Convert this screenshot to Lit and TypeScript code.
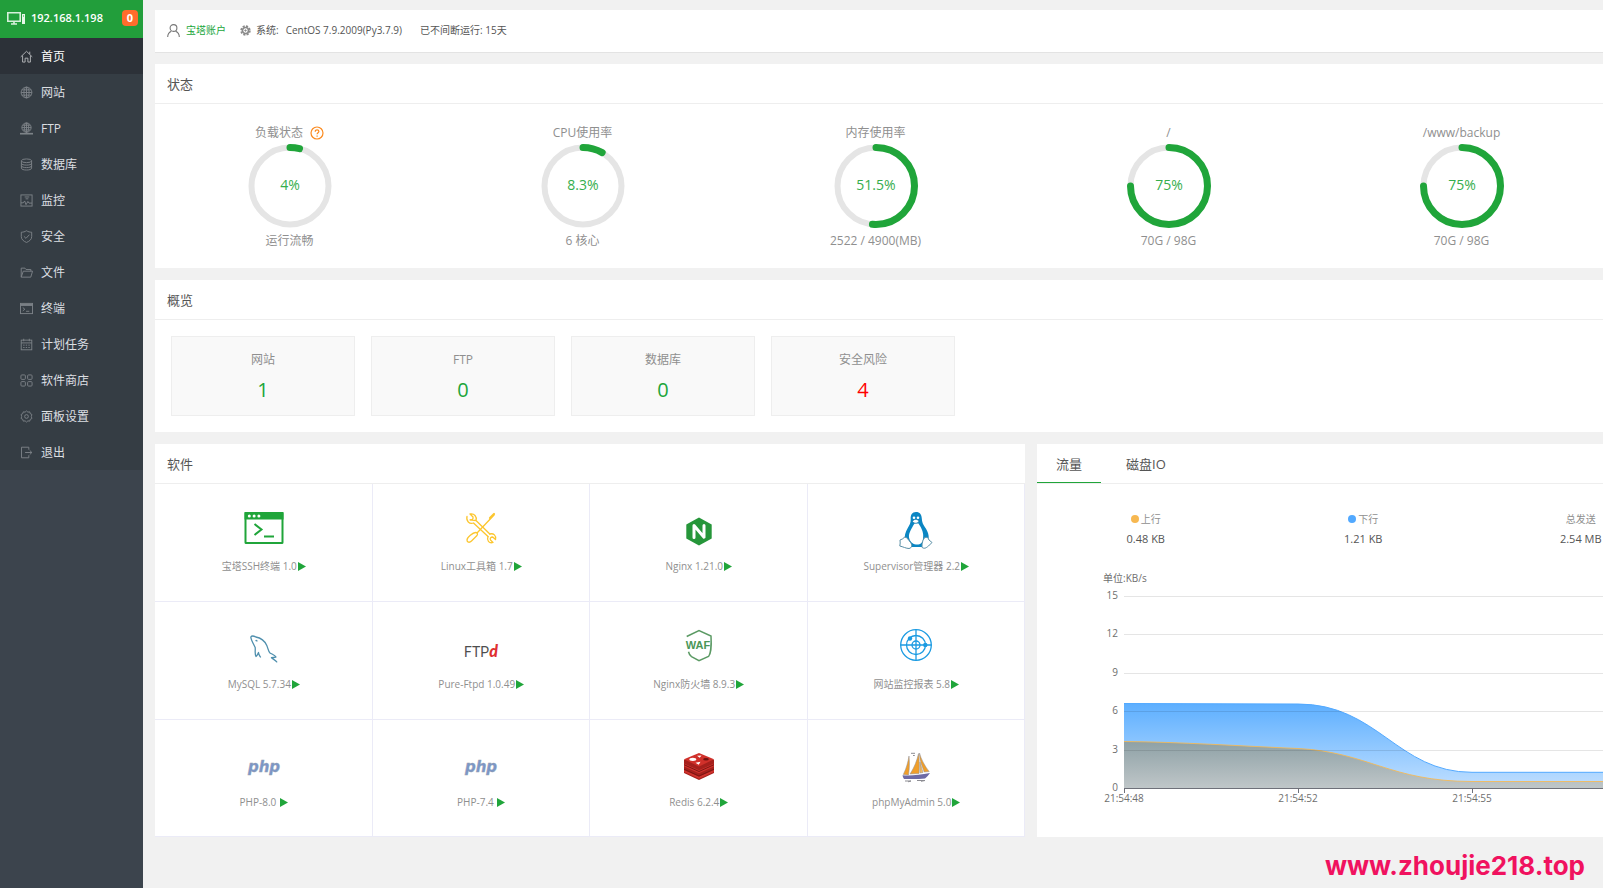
import { LitElement, html, svg, css, nothing } from "lit";
import type { SVGTemplateResult } from "lit";
import { customElement, property, state } from "lit/decorators.js";
import { classMap } from "lit/directives/class-map.js";

const navIcons: Record<string, SVGTemplateResult> = {
  home: svg`<path d="M.8 7.400 7 1.400l6.200 6M2.800 6v7h2.700V8.800h3V13h2.700V6M10.500 1.800v2.500"/>`,
  globe: svg`<circle cx="7" cy="7" r="5.800"/><ellipse cx="7" cy="7" rx="2.800" ry="5.800"/><path d="M7 1.200v11.600M1.200 7h11.600M2 4.200h10M2 9.800h10"/>`,
  ftp: svg`<circle cx="7" cy="6" r="5"/><ellipse cx="7" cy="6" rx="2.300" ry="5"/><path d="M7 1v11M2 6h10M3 3.500h8M3 8.500h8"/><path d="M0 12.600h14" stroke-width="1.800"/>`,
  database: svg`<ellipse cx="7" cy="3" rx="5.500" ry="2"/><path d="M1.500 3v8c0 2.600 11 2.600 11 0V3M1.500 5.700c0 2.600 11 2.600 11 0M1.500 8.400c0 2.600 11 2.600 11 0"/>`,
  monitor: svg`<rect x="1" y="1" width="12" height="12"/><path d="M5 3.200h5M6 5.200h3M1 9.500h2.500L5 7.500l1.500 4 2-3.500 1.200 1.800H13"/>`,
  shield: svg`<path d="M7 .8c1.800 1.100 3.600 1.600 5.600 1.600v4.800c0 3-2.500 4.900-5.600 6.200C3.900 12.100 1.400 10.200 1.400 7.200V2.400C3.400 2.400 5.200 1.900 7 .8zM4.200 6.800l2.200 2.200 3.800-4"/>`,
  folder: svg`<path d="M1.300 12V2.300h4l1.200 1.500h5.200v1.800M1.300 12 3.500 5.600h10L11.600 12z"/>`,
  terminal: svg`<rect x=".5" y="1.500" width="13" height="11"/><path d="M.5 3.200h13" stroke-width="2"/><path d="m3 6 2.200 1.800L3 9.600M6.500 10h3.500"/>`,
  calendar: svg`<rect x="1.300" y="2.300" width="11.400" height="10.400"/><path d="M1.300 5.300h11.400M4 .8v2.700M10 .8v2.700"/><path d="M3.400 7.700h7.400M3.400 10.200h7.400" stroke-dasharray="1.500 1.300"/>`,
  grid: svg`<rect x="1" y="1" width="4.800" height="4.800" rx="1"/><rect x="8.200" y="1" width="4.800" height="4.800" rx="1"/><rect x="1" y="8.200" width="4.800" height="4.800" rx="1"/><rect x="8.200" y="8.200" width="4.800" height="4.800" rx="1"/>`,
  gear: svg`<circle cx="7" cy="7" r="2"/><path d="M7 1l1.500 1.300 2-.3.500 1.900 1.800.9-.6 2.200.6 2.200-1.800.9-.5 1.900-2-.3L7 13l-1.500-1.300-2 .3-.5-1.900-1.800-.9.600-2.200-.6-2.200L3 3.900 3.500 2l2 .3z"/>`,
  exit: svg`<path d="M9.500 4V1.300H1.600v11.400h7.900V10M5.500 7h7.300M10.500 4.800 12.800 7l-2.300 2.200"/>`,
};

interface NavItem { label: string; icon: string }
const navItems: NavItem[] = [
  { label: "首页", icon: "home" },
  { label: "网站", icon: "globe" },
  { label: "FTP", icon: "ftp" },
  { label: "数据库", icon: "database" },
  { label: "监控", icon: "monitor" },
  { label: "安全", icon: "shield" },
  { label: "文件", icon: "folder" },
  { label: "终端", icon: "terminal" },
  { label: "计划任务", icon: "calendar" },
  { label: "软件商店", icon: "grid" },
  { label: "面板设置", icon: "gear" },
  { label: "退出", icon: "exit" },
];

/* Software logos share a 48 x 48 canvas. */
const logos: Record<string, SVGTemplateResult> = {
  ssh: svg`<rect x="5.500" y="9" width="37" height="30" rx=".5" fill="#fff" stroke="#20a53a" stroke-width="2"/>
    <path d="M4.500 8h39v7.500h-39z" fill="#20a53a"/>
    <g fill="#fff"><circle cx="9.300" cy="12" r="1.500"/><circle cx="14.100" cy="12" r="1.500"/><circle cx="18.900" cy="12" r="1.500"/></g>
    <path d="m14.500 20 7 5.500-7 5.500M24 32.500h10" fill="none" stroke="#20a53a" stroke-width="2"/>`,
  tools: svg`<g fill="none" stroke="#fcc62f" stroke-width="1.300" stroke-linejoin="round" stroke-linecap="round">
    <path d="M10 12.500c-1 4.500 2.200 7.800 6.500 6.500L31 32.500M19 16.500 32.800 30M19 16.500c1.200-3.900-1.800-7.400-6-6.500l3 3c.5 2-1.200 3.500-3 2.800z"/>
    <path d="M32.800 30c3.700-1 6.700 1.500 5.700 5.500l-2.800-2.500c-2 0-3 1.500-2.200 3l2.500 2.500c-4 1.200-6.500-2.300-5-6"/>
    <path d="M37 11 20.500 28.500"/><path d="m37 10-4 4" stroke-width="2.200"/>
    <path d="M18.500 28.500c-2.500 0-8.500 5-8.500 7.500s2.500 3 4.500 1l5.500-5.500c1-1.500.5-3-1.500-3z"/></g>`,
  nginx: svg`<path d="m24 13.500 12.700 7v14L24 41.500l-12.700-7v-14z" fill="#26963a"/>
    <path d="M19 33.500v-12L29 33.200V21.500" fill="none" stroke="#fff" stroke-width="3" stroke-linejoin="round" stroke-linecap="round"/>`,
  tux: svg`<path d="M24 8c-4 0-5.500 3-5.300 7 .2 4-1.200 6-3.200 9.500-2 3.500-3.500 8-2.500 12l5 6.500h12l6-6c2-4.500-.3-10-3.200-14-1.800-2.500-2.800-5-3-8.500C29.500 10.500 28 8 24 8z" fill="#0b86c3"/>
    <path d="M22.500 19.500c-3 5-6 9.500-5.500 14 1 4 3 6.500 7 7s7-1.500 7-6c1-5-1-10-4.500-15z" fill="#fff"/>
    <path d="M20.500 17.500c1-2 2.500-2.300 4-2 1.300.3 2.300 1 2.300 1.900-1.300 1.600-3.800 3-6.300.1z" fill="#fff" stroke="#0b6f9f" stroke-width=".6"/>
    <circle cx="22" cy="13.700" r="1.300" fill="#fff"/><circle cx="26" cy="13.700" r="1.300" fill="#fff"/>
    <path d="M12.500 33c-.7 2-3.800 2.500-4.500 3 .3 2 .3 4-.2 6 3 .7 6.500 2.500 9.200 2.500 3-.5 3.500-3.500 1.500-6-1.500-2-3.500-5.500-6-5.500zM33 33.500c-2 1-3.500 7-2.800 10 2.800 2 5-.7 6.300-1.500l3.500-3.500-3-2.500c-.5-2-2.500-3.500-4-2.500z" fill="#fff" stroke="#5a8fa6" stroke-width="1"/>`,
  mysql: svg`<g fill="none" stroke="#4f8fad" stroke-width="1.300" stroke-linejoin="round" stroke-linecap="round">
    <path d="M20.500 35c-1-1.500-2-2.500-2-4.500-1 1.500-1 3-2.500 4-1.500-3-.5-5.500-.8-9-1.200-2.500-4.200-7.500-4.400-10.500 1-1.500 3.500-.8 5 0 5.500 1 9.200 4.500 11 8.500 1.300 3 1.500 6 3.200 7.500 2.200 1.300 5 2 6 4-1.300.8-3.300.3-4.500.7 1.500 1.500 3.800 2.300 5.200 4.200"/>
    <path d="M16 18.500c.3-.3.800 0 1 .5"/></g>`,
  ftpd: svg`<text x="24" y="35" text-anchor="middle" font-family="Roboto, sans-serif" font-size="14" fill="#4e4e4e">FTP<tspan font-family="Lato, sans-serif" font-size="16" font-style="italic" font-weight="900" fill="#e03030">d</tspan></text>`,
  waf: svg`<path d="m11.700 14.500 12.300-6 12 5.500c.5 8-.2 18-2.500 20.500L24 38.700l-7.500-4c-1.500-1-2.500-3-3-5" fill="none" stroke="#5b9a64" stroke-width="1.500"/>
    <text x="23" y="27" text-anchor="middle" font-family="Liberation Sans, sans-serif" font-size="11" font-weight="700" fill="#4b9657">WAF</text>`,
  radar: svg`<g fill="none" stroke="#1b9be2" stroke-width="1.300"><circle cx="24" cy="23" r="15.300"/><circle cx="24" cy="23" r="9.500"/><circle cx="24" cy="23" r="4"/><path d="M8.500 23h31M24 7.500v31"/></g>
    <g fill="#1b9be2"><circle cx="18" cy="16.500" r="2.200"/><circle cx="33.300" cy="23" r="2.200"/></g>`,
  php: svg`<text x="24" y="32" text-anchor="middle" font-family="DejaVu Sans, sans-serif" font-size="15" font-weight="700" font-style="italic" fill="#7a97c9" stroke="#9a9fae" stroke-width=".4">php</text>`,
  redis: svg`<path d="M9 19.500V33l15 7 15-7V19.500z" fill="#a5201c"/>
    <path d="m9 26.500 15 6.800 15-6.800v-3l-15 6.800-15-6.800zM9 32l15 6.800L39 32v-2l-15 6.800L9 30z" fill="#d0332d"/>
    <path d="M9 29.200 24 36l15-6.800M9 24.700l15 6.800 15-6.800" stroke="#7d1512" stroke-width="1" fill="none"/>
    <path d="m9 19.300 15-6.300 15 6.300-15 7.200z" fill="#d0302a"/>
    <ellipse cx="17.800" cy="19.300" rx="3.500" ry="1.600" fill="#fff"/><path d="m20.500 22.800 5-1-1.800 3zM22 15.800l4.500-.4-1.800 2.400z" fill="#fff"/><ellipse cx="31" cy="19.200" rx="2.800" ry="1.300" fill="#6e1210"/>`,
  pma: svg`<g stroke="#8d8d93" stroke-width=".5"><path d="M17 16c-1 6-2.500 12-5.700 18.500l5.200.5c1-6 1.200-12 .5-19z" fill="#f09e2a"/>
    <path d="M26.500 13.500c-1.500 7-4 13.500-8.500 20.500l9-.5c.5-6 .5-13-.5-20z" fill="#f09e2a"/>
    <path d="M27.500 13c1.500 6 5.500 13.500 9.700 18.500l-5 .5c-2-6-4.500-10-4.700-19z" fill="#f09e2a"/><path d="m28 22 3 10.500-3 .5z" fill="#f6b95c"/></g>
    <path d="M10.500 35.300c8 .7 17-.3 27.500-2.300-1.500 2-3 4-5 5.500-7 .8-14 .5-21 .5-.8-1-1.300-2.300-1.500-3.700z" fill="#6d6aa5"/>
    <path d="M13 41h6l-3 .8M25 40.500h8l-4 .8M19 13.300h4M21 15.500h1.800" stroke="#8d8d93" fill="none"/>`,
};

const software = [
  { name: "宝塔SSH终端 1.0", logo: "ssh" },
  { name: "Linux工具箱 1.7", logo: "tools" },
  { name: "Nginx 1.21.0", logo: "nginx" },
  { name: "Supervisor管理器 2.2", logo: "tux" },
  { name: "MySQL 5.7.34", logo: "mysql" },
  { name: "Pure-Ftpd 1.0.49", logo: "ftpd" },
  { name: "Nginx防火墙 8.9.3", logo: "waf" },
  { name: "网站监控报表 5.8", logo: "radar" },
  { name: "PHP-8.0 ", logo: "php" },
  { name: "PHP-7.4 ", logo: "php" },
  { name: "Redis 6.2.4", logo: "redis" },
  { name: "phpMyAdmin 5.0", logo: "pma" },
];

const gauges = [
  { title: "负载状态", value: 4, note: "运行流畅", help: true },
  { title: "CPU使用率", value: 8.3, note: "6 核心" },
  { title: "内存使用率", value: 51.5, note: "2522 / 4900(MB)" },
  { title: "/", value: 75, note: "70G / 98G" },
  { title: "/www/backup", value: 75, note: "70G / 98G" },
];

const overview = [
  { label: "网站", value: 1 },
  { label: "FTP", value: 0 },
  { label: "数据库", value: 0 },
  { label: "安全风险", value: 4, risk: true },
];

@customElement("usage-gauge")
export class UsageGauge extends LitElement {
  @property() heading = "";
  @property({ type: Number }) value = 0;
  @property() note = "";
  @property({ type: Boolean }) help = false;

  static styles = css`
    :host { display: flex; flex-direction: column; align-items: center; font-size: 12px; line-height: 18px; color: #8f8f8f; }
    .title { display: flex; align-items: center; gap: 7px; white-space: nowrap; }
    .help { width: 14px; height: 14px; display: block; }
    .ring { display: block; width: 84px; height: 84px; margin: 2px 0 4px; }
    .track { fill: none; stroke: #e5e5e5; stroke-width: 6; }
    .arc { fill: none; stroke: #20a53a; stroke-width: 7; stroke-linecap: round; }
    .value { fill: #35ae4d; font-size: 14px; text-anchor: middle; }
  `;

  render() {
    return html`
      <div class="title">${this.heading}${this.help
        ? html`<svg class="help" viewBox="0 0 14 14" role="img" aria-label="help"><circle cx="7" cy="7" r="6" fill="none" stroke="#fb8a1f" stroke-width="1.200"/><path d="M5.200 5.700c0-2.500 3.700-2.300 3.700-.2 0 1.200-1.800 1.400-1.800 2.800M7.100 9.600v1.200" fill="none" stroke="#fb8a1f" stroke-width="1.200"/></svg>`
        : nothing}</div>
      <svg class="ring" viewBox="0 0 84 84">
        <circle class="track" cx="42" cy="42" r="38.500"></circle>
        <circle class="arc" cx="42" cy="42" r="38.500" pathLength="100" stroke-dasharray="${this.value} 100" transform="rotate(-90 42 42)"></circle>
        <text class="value" x="42" y="46">${this.value}%</text>
      </svg>
      <div>${this.note}</div>
    `;
  }
}

@customElement("traffic-chart")
export class TrafficChart extends LitElement {
  static styles = css`
    :host { display: block; }
    .plot { display: block; width: 100%; height: 277px; overflow: hidden; }
    .tick { font-size: 10px; fill: #6e6e6e; }
    .end { text-anchor: end; }
    .mid { text-anchor: middle; }
    .rule { stroke: #000; stroke-opacity: 0.1; }
    .axis { stroke: #6e7079; }
  `;

  render() {
    const base = 228;
    const step = 38.4;
    const left = 87;
    return html`
      <svg class="plot">
        <defs>
          <linearGradient id="down" x1="0" y1="0" x2="0" y2="1"><stop offset="0" stop-color="#5dafff"/><stop offset="1" stop-color="#c0dfff"/></linearGradient>
          <linearGradient id="up" x1="0" y1="0" x2="0" y2="1"><stop offset="0" stop-color="#8ea1a6"/><stop offset="1" stop-color="#bfc6c8"/></linearGradient>
        </defs>
        <text class="tick" x="66" y="22">单位:KB/s</text>
        <path fill="url(#down)" d="M87 143.500 261 144C341 144 360 212.300 435 212.300H826V228H87z"/>
        <path fill="none" stroke="#52a9ff" d="M87 143.500 261 144C341 144 360 212.300 435 212.300H826"/>
        <path fill="url(#up)" d="M87 181.500C143 182 203 186 261 188.500C331 192 353 221.500 435 221.500H826V228H87z"/>
        <path fill="none" stroke="#f7b851" stroke-opacity=".85" d="M87 181.500C143 182 203 186 261 188.500C331 192 353 221.500 435 221.500H826"/>
        ${[0, 3, 6, 9, 12, 15].map((v, i) => {
          const y = Math.round(base - i * step) + 0.5;
          return svg`<line class=${i ? "rule" : "axis"} x1=${left} x2="826" y1=${y} y2=${y}></line>
            <text class="tick end" x="81" y=${y + 2}>${v}</text>`;
        })}
        ${["21:54:48", "21:54:52", "21:54:55"].map((t, i) => svg`
          <line class="axis" x1=${left + i * 174 + 0.5} x2=${left + i * 174 + 0.5} y1="228" y2="233"></line>
          <text class="tick mid" x=${left + i * 174} y="242">${t}</text>`)}
      </svg>
    `;
  }
}

@customElement("app-root")
export class AppRoot extends LitElement {
  @state() private current = "首页";
  @state() private tab = "流量";

  static styles = css`
    :host {
      display: block; position: relative; overflow: hidden; min-height: 100vh;
      background: #f1f1f1; color: #555;
      font: 12px/20px "Open Sans", "Noto Sans CJK SC", sans-serif;
    }
    * { box-sizing: border-box; }
    a { color: inherit; text-decoration: none; }
    .shell { display: flex; min-height: 100vh; }
    .side { flex: none; width: 143px; background: #3c444d; }
    .host { display: flex; align-items: center; height: 38px; padding: 0 5px 2px 7px; background: #229e3b; color: #fff; font-size: 11px; font-weight: 600; }
    .pc { width: 18px; height: 14px; margin-right: 6px; }
    .badge { margin-left: auto; width: 16px; height: 16px; line-height: 16px; border-radius: 4px; background: #ff6c2c; text-align: center; font-weight: 700; }
    .nav { margin: 0; padding: 0; list-style: none; background: #353d44; }
    .link { display: flex; align-items: center; gap: 8px; height: 36px; padding: 1px 0 0 20px; color: #dcdfe2; }
    .link svg { width: 13px; height: 13px; fill: none; stroke: #7d8388; stroke-width: 1; }
    .link.on { background: #2c3138; color: #fff; }
    .link.on svg { stroke: #b4b7ba; }

    .main { flex: 1 0 auto; min-width: 1777px; padding: 10px 13px 12px 12px; display: flex; flex-direction: column; gap: 12px; }
    .panel { background: #fff; }
    .head { height: 40px; margin: 0; padding: 0 12px; border-bottom: 1px solid #eee; font-size: 13px; font-weight: 400; line-height: 40px; }
    .top { display: flex; align-items: center; height: 42px; padding: 0 0 2px 12px; background: #fff; box-shadow: 0 1px 0 #e3e3e3; font-size: 10px; }
    .top svg { width: 13px; height: 13px; margin-right: 6px; }
    .account { display: flex; align-items: center; margin-right: 14px; color: #20a53a; }
    .system { display: flex; align-items: center; margin-right: 18px; }
    .system .gear { width: 11px; height: 11px; margin-right: 5px; }
    .system b { font-weight: 400; margin-right: 7px; }

    .gauges { display: grid; grid-template-columns: repeat(6, 1fr); margin: 0 6px 0 -12px; padding: 20px 0 18px; }
    .cards { display: flex; gap: 16px; padding: 16px; }
    .card { width: 184px; height: 80px; padding-top: 13px; border: 1px solid #eee; background: #f9f9f9; text-align: center; color: #8f8f8f; }
    .count { display: block; margin-top: 4px; font-size: 20px; line-height: 32px; color: #20a53a; }
    .count.risk { color: #f00; }

    .halves { display: grid; grid-template-columns: 1fr 1fr; gap: 12px; align-items: start; }
    .soft { display: grid; grid-template-columns: repeat(4, 1fr); }
    .app { display: flex; flex-direction: column; align-items: center; gap: 4px; padding: 20px 0 25px 1px; border: solid #ebebf7; border-width: 0 1px 1px 0; color: #8f8f8f; font-size: 10px; }
    .app:nth-child(n + 9) { padding-bottom: 24px; }
    .logo { width: 48px; height: 48px; display: block; }
    .name { display: flex; align-items: center; gap: 1px; white-space: pre; }
    .play { width: 8px; height: 9px; fill: #20a53a; }

    .tabs { display: flex; gap: 6px; padding: 0; }
    .tab { height: 39px; padding: 0 19px; border: 0; border-bottom: 1px solid transparent; background: none; color: inherit; font: inherit; }
    .tab.on { border-bottom-color: #20a53a; }
    .rates { display: grid; grid-template-columns: repeat(4, 1fr); margin: 0; padding: 25px 0 11px; text-align: center; }
    .rates dt { display: flex; justify-content: center; align-items: center; gap: 2px; font-size: 10px; color: #8f8f8f; }
    .rates dd { margin: 0; font-size: 11px; }
    .dot { width: 8px; height: 8px; border-radius: 50%; }
    .dot.up { background: #f7b851; }
    .dot.down { background: #52a9ff; }
    .mark { position: absolute; right: 18px; bottom: 7px; color: #f0125f; font: 700 26px/30px Inter, sans-serif; }
  `;

  render() {
    return html`
      <div class="shell">
        <aside class="side">
          <div class="host">
            <svg class="pc" viewBox="0 0 18 14"><path d="M.8 1.800h12.400v8.400H.8z" fill="none" stroke="#d6f0db" stroke-width="1.600"/><path d="M4 13h6M7 10.500V13" stroke="#d6f0db" stroke-width="1.600"/><path d="M15 3h3v10h-3z" fill="#e6f7e9"/><path d="M16 5h1" stroke="#229e3b"/></svg>
            <span>192.168.1.198</span><span class="badge">0</span>
          </div>
          <nav>
            <ul class="nav">
              ${navItems.map((n) => html`<li><a href="#" class=${classMap({ link: true, on: n.label === this.current })}
                @click=${(e: Event) => { e.preventDefault(); this.current = n.label; }}>
                <svg viewBox="0 0 14 14">${navIcons[n.icon]}</svg>${n.label}</a></li>`)}
            </ul>
          </nav>
        </aside>
        <main class="main">
          <div class="top">
            <a class="account" href="#"><svg viewBox="0 0 13 13" fill="none" stroke="#777" stroke-width="1.100"><circle cx="6.500" cy="4" r="3.400"/><path d="M.7 13c0-3.200 1.500-4.800 3.600-5.800M12.300 13c0-3.200-1.500-4.800-3.600-5.800"/></svg>宝塔账户</a>
            <span class="system"><svg class="gear" viewBox="0 0 12 12" fill="none" stroke="#8a8a8a"><circle cx="6" cy="6" r="4.800" stroke-width="1.800" stroke-dasharray="2.300 1.470"/><circle cx="6" cy="6" r="3.300" stroke-width="1.800"/><circle cx="6" cy="6" r=".8" fill="#8a8a8a"/></svg><b>系统:</b>CentOS 7.9.2009(Py3.7.9)</span>
            <span>已不间断运行: 15天</span>
          </div>
          <section class="panel">
            <h3 class="head">状态</h3>
            <div class="gauges">
              ${gauges.map((g) => html`<usage-gauge .heading=${g.title} .value=${g.value} .note=${g.note} .help=${!!g.help}></usage-gauge>`)}
            </div>
          </section>
          <section class="panel">
            <h3 class="head">概览</h3>
            <div class="cards">
              ${overview.map((c) => html`<div class="card">${c.label}<a href="#" class=${classMap({ count: true, risk: !!c.risk })}>${c.value}</a></div>`)}
            </div>
          </section>
          <div class="halves">
            <section class="panel">
              <h3 class="head">软件</h3>
              <div class="soft">
                ${software.map((s) => html`<div class="app">
                  <svg class="logo" viewBox="0 0 48 48">${logos[s.logo]}</svg>
                  <span class="name">${s.name}<svg class="play" viewBox="0 0 8 9"><path d="M0 0l8 4.500L0 9z"/></svg></span>
                </div>`)}
              </div>
            </section>
            <section class="panel">
              <div class="head tabs" role="tablist">
                ${["流量", "磁盘IO"].map((t) => html`<button role="tab" aria-selected=${t === this.tab}
                  class=${classMap({ tab: true, on: t === this.tab })} @click=${() => { this.tab = t; }}>${t}</button>`)}
              </div>
              <dl class="rates">
                <div><dt><i class="dot up"></i>上行</dt><dd>0.48 KB</dd></div>
                <div><dt><i class="dot down"></i>下行</dt><dd>1.21 KB</dd></div>
                <div><dt>总发送</dt><dd>2.54 MB</dd></div>
              </dl>
              <traffic-chart></traffic-chart>
            </section>
          </div>
        </main>
      </div>
      <div class="mark">www.zhoujie218.top</div>
    `;
  }
}
